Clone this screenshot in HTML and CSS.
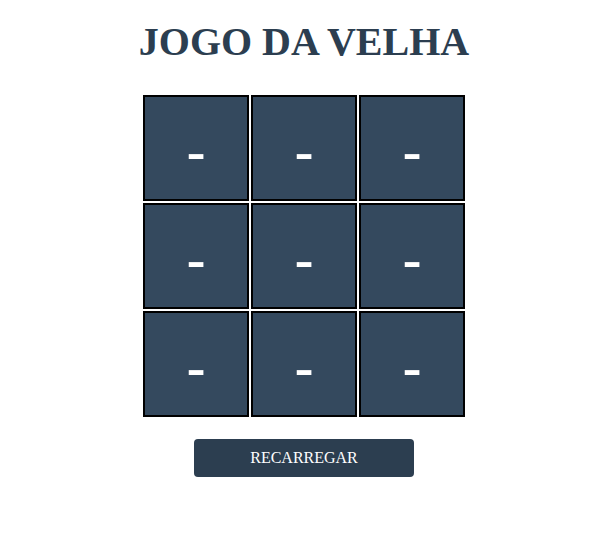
FILE: index.html
```html
<!DOCTYPE html>
<html lang="pt">
<head>
<meta charset="utf-8">
<title>Jogo da Velha</title>
<link rel="stylesheet" href="styles.css">
</head>
<body>
<main class="game">
  <h1 class="title">JOGO DA VELHA</h1>
  <div class="board">
    <div class="cell">-</div>
    <div class="cell">-</div>
    <div class="cell">-</div>
    <div class="cell">-</div>
    <div class="cell">-</div>
    <div class="cell">-</div>
    <div class="cell">-</div>
    <div class="cell">-</div>
    <div class="cell">-</div>
  </div>
  <button class="reload" type="button">RECARREGAR</button>
</main>
</body>
</html>
```
FILE: styles.css
```css
html, body {
  margin: 0;
  background: #ffffff;
}

body {
  padding-left: 7px;
  font-family: "Liberation Serif", "Times New Roman", serif;
}

.game {
  display: flex;
  flex-direction: column;
  align-items: center;
}

.title {
  margin: 19px 0 0;
  font-size: 40px;
  line-height: 46px;
  font-weight: bold;
  color: #2c3e50;
}

.board {
  margin-top: 30px;
  display: grid;
  grid-template-columns: repeat(3, 106px);
  grid-auto-rows: 106px;
  gap: 2px;
}

.cell {
  box-sizing: border-box;
  border: 2px solid #000000;
  background: #34495e;
  color: #ffffff;
  font-family: "Liberation Serif", "Times New Roman", serif;
  font-weight: bold;
  font-size: 56px;
  display: flex;
  align-items: center;
  justify-content: center;
  padding-top: 6px;
}

.reload {
  margin-top: 22px;
  width: 220px;
  height: 38px;
  border: none;
  border-radius: 4px;
  background: #2c3e50;
  color: #ffffff;
  font-family: "Liberation Serif", "Times New Roman", serif;
  font-size: 16px;
  padding: 0;
}
```
